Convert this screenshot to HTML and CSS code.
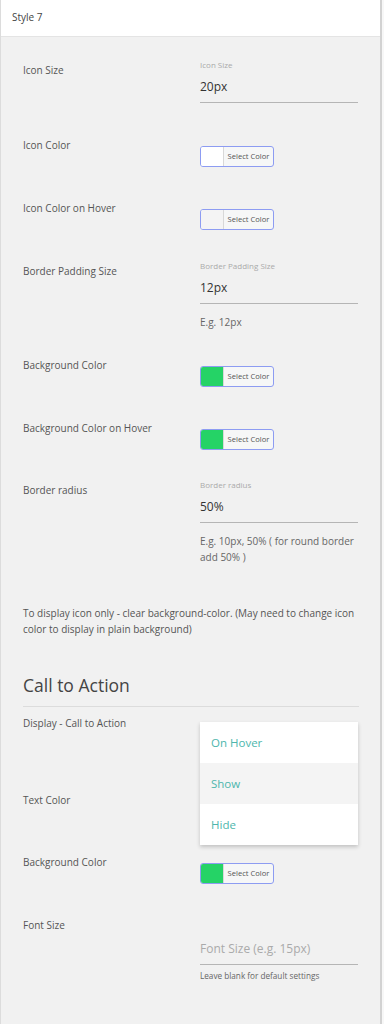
FILE: index.html
```html
<!DOCTYPE html>
<html lang="en">
<head>
    <meta charset="UTF-8">
    <meta name="viewport" content="width=device-width, initial-scale=1.0">
    <title>Style 7</title>
    <link rel="stylesheet" href="styles.css">
</head>
<body>
    <div class="panel">
        <div class="panel-head">Style 7</div>
        <div class="panel-body">
            <!-- Icon -->
            <div class="row row-input">
                <div class="label">Icon Size</div>
                <div class="ctl">
                    <div class="field">
                        <span class="float-label">Icon Size</span>
                        <div class="value">20px</div>
                    </div>
                </div>
            </div>
            <div class="row">
                <div class="label">Icon Color</div>
                <div class="ctl">
                    <button class="color-btn"><span class="swatch"></span><span class="btn-text">Select Color</span></button>
                </div>
            </div>
            <div class="row">
                <div class="label">Icon Color on Hover</div>
                <div class="ctl">
                    <button class="color-btn"><span class="swatch swatch-hover"></span><span class="btn-text">Select Color</span></button>
                </div>
            </div>
            <div class="row row-help">
                <div class="label">Border Padding Size</div>
                <div class="ctl">
                    <div class="field">
                        <span class="float-label">Border Padding Size</span>
                        <div class="value">12px</div>
                    </div>
                    <p class="help">E.g. 12px</p>
                </div>
            </div>
            <div class="row">
                <div class="label">Background Color</div>
                <div class="ctl">
                    <button class="color-btn"><span class="swatch swatch-green"></span><span class="btn-text">Select Color</span></button>
                </div>
            </div>
            <div class="row row-short">
                <div class="label">Background Color on Hover</div>
                <div class="ctl">
                    <button class="color-btn"><span class="swatch swatch-green"></span><span class="btn-text">Select Color</span></button>
                </div>
            </div>
            <div class="row row-radius">
                <div class="label">Border radius</div>
                <div class="ctl">
                    <div class="field">
                        <span class="float-label">Border radius</span>
                        <div class="value">50%</div>
                    </div>
                    <p class="help">E.g. 10px, 50% ( for round border add 50% )</p>
                </div>
            </div>
            <p class="note">To display icon only - clear background-color. (May need to change icon color to display in plain background)</p>

            <!-- Call to Action -->
            <h2 class="section-title">Call to Action</h2>
            <div class="row row-select">
                <div class="label">Display - Call to Action</div>
                <div class="ctl">
                    <ul class="dropdown">
                        <li>On Hover</li>
                        <li class="active">Show</li>
                        <li>Hide</li>
                    </ul>
                </div>
            </div>
            <div class="row row-short">
                <div class="label">Text Color</div>
                <div class="ctl">
                    <button class="color-btn"><span class="swatch"></span><span class="btn-text">Select Color</span></button>
                </div>
            </div>
            <div class="row">
                <div class="label">Background Color</div>
                <div class="ctl">
                    <button class="color-btn"><span class="swatch swatch-green"></span><span class="btn-text">Select Color</span></button>
                </div>
            </div>
            <div class="row row-input">
                <div class="label">Font Size</div>
                <div class="ctl">
                    <div class="field field-empty">
                        <div class="value placeholder">Font Size (e.g. 15px)</div>
                    </div>
                    <p class="help help-small">Leave blank for default settings</p>
                </div>
            </div>
        </div>
    </div>
</body>
</html>
```

FILE: styles.css
```css
body {
    margin: 0;
    background: #f7f7f7;
    font-family: 'Open Sans', 'Noto Sans', sans-serif;
    color: #555;
}
.panel {
    width: 379px;
    min-height: 1024px;
    background: #f1f1f1;
    border-left: 1px solid #dcdcdc;
    border-right: 2px solid #d2d2d2;
}
.panel-head {
    height: 36px;
    line-height: 34px;
    padding-left: 11px;
    font-size: 10px;
    color: #444;
    background: #fff;
    border-bottom: 1px solid #e4e4e4;
}
.panel-body {
    padding: 26px 21px 0 22px;
}
.row {
    display: flex;
    align-items: flex-start;
    min-height: 63px;
}
.row-input { min-height: 75px; }
.row-short { min-height: 62px; }
.row-help { min-height: 94px; }
.row-radius { min-height: 122px; }
.row-select { min-height: 77px; }
.label {
    width: 177px;
    flex: none;
    font-size: 10px;
    line-height: 14px;
    color: #555;
}
.ctl {
    width: 158px;
    position: relative;
}
.field {
    margin-top: -4px;
}
.float-label {
    display: block;
    font-size: 8px;
    line-height: 12px;
    color: #aaa;
}
.value {
    margin-top: 8px;
    font-size: 12px;
    line-height: 16px;
    padding-bottom: 7px;
    color: #333;
    border-bottom: 1px solid #b5b5b5;
}
.field-empty .value {
    margin-top: 27px;
}
.placeholder {
    color: #aaa;
}
.help {
    margin: 10px 0 0;
    font-size: 10px;
    line-height: 16px;
    color: #666;
}
.help-small {
    margin-top: 6px;
    font-size: 8.2px;
    line-height: 10px;
}
.color-btn {
    display: flex;
    margin-top: 8px;
    padding: 0;
    width: 74px;
    height: 21px;
    border: 1px solid #8d9cf2;
    border-radius: 3px;
    background: #f6f7f7;
    overflow: hidden;
    cursor: pointer;
}
.swatch {
    width: 22px;
    height: 100%;
    flex: none;
    background: #fff;
    border-right: 1px solid #d8d8d8;
}
.swatch-hover { background: #f4f4f4; }
.swatch-green { background: #25d366; }
.btn-text {
    flex: 1;
    font-family: 'Open Sans', sans-serif;
    font-size: 7.6px;
    line-height: 19px;
    color: #555;
    text-align: center;
}
.note {
    margin: 0;
    width: 335px;
    font-size: 10px;
    line-height: 16px;
    color: #555;
}
.section-title {
    margin: 36px 0 9px;
    padding-bottom: 9px;
    font-size: 17.5px;
    line-height: 24px;
    font-weight: 400;
    color: #444;
    border-bottom: 1px solid #dcdcdc;
}
.dropdown {
    position: absolute;
    top: 6px;
    left: 0;
    z-index: 2;
    width: 158px;
    margin: 0;
    padding: 0;
    list-style: none;
    background: #fff;
    box-shadow: 0 2px 4px rgba(0, 0, 0, 0.2);
}
.dropdown li {
    height: 41px;
    line-height: 41px;
    padding-left: 11px;
    font-size: 11.5px;
    color: #4db6ac;
}
.dropdown li.active {
    background: #f4f4f4;
}
```
